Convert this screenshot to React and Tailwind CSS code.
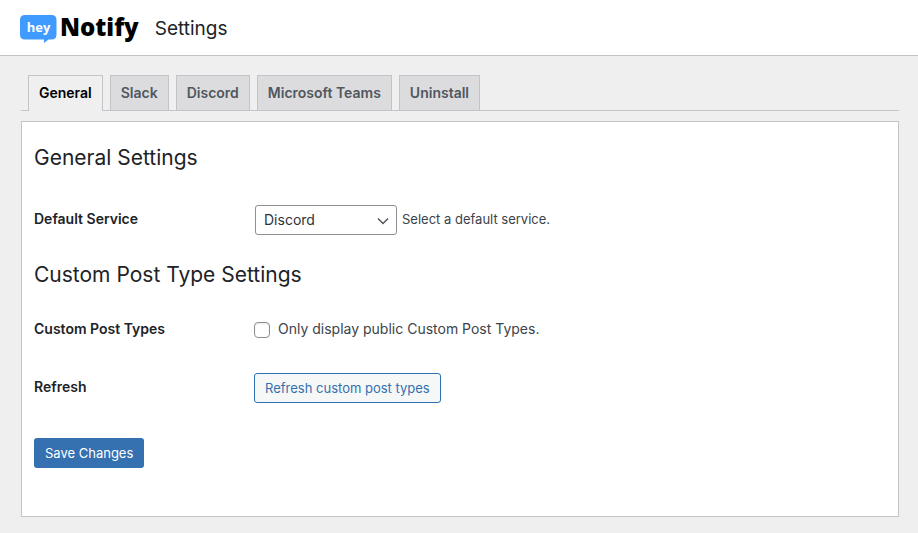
import React from "react";

const tabs = ["General", "Slack", "Discord", "Microsoft Teams", "Uninstall"];

function Logo() {
  return (
    <a href="#home" aria-label="hey Notify" className="flex items-start gap-[3px] text-black">
      <span className="relative flex h-7 w-[37px]">
        <svg viewBox="0 0 37 28" className="absolute inset-0 h-7 w-[37px]" fill="#3f9bff" aria-hidden="true">
          <path d="M5 0H31.500Q36.500 0 36.500 5V19.500Q36.500 24.500 31.500 24.500H28.500L24 28V24.500H5Q0 24.500 0 19.500V5Q0 0 5 0Z" />
        </svg>
        <span className="relative w-full text-center font-['Open_Sans',sans-serif] text-[13px] leading-6 font-bold text-white">
          hey
        </span>
      </span>
      <span className="font-['Noto_Sans',sans-serif] text-2xl leading-6 font-black">Notify</span>
    </a>
  );
}

function Field({ label, htmlFor, children, className }) {
  return (
    <div className={"flex items-center " + className}>
      <label htmlFor={htmlFor} className="w-[220px] shrink-0 pb-[2px] text-sm font-semibold text-[#1d2327]">
        {label}
      </label>
      {children}
    </div>
  );
}

export default function App() {
  return (
    <div className="min-h-screen bg-[#efefef] pb-4 font-[Inter,sans-serif] text-[#3c434a]">
      <header className="flex h-14 items-center gap-4 border-b border-[#c3c4c7] bg-white px-5 pt-[3px]">
        <Logo />
        <h1 className="text-[19px] leading-7 text-[#1d2327]">Settings</h1>
      </header>

      <main className="mr-[19px] ml-[21px] pt-[19px]">
        <nav className="flex gap-[7px] border-b border-[#c3c4c7] pl-[7px]">
          {tabs.map((tab, i) => (
            <a
              key={tab}
              href={"#" + tab}
              className={
                "border-x border-t border-[#c3c4c7] px-[10px] pt-[5px] text-sm leading-6 font-semibold " +
                (i === 0 ? "-mb-px bg-[#efefef] pb-[6px] text-black" : "bg-[#dcdcde] pb-[5px] text-[#50575e]")
              }
            >
              {tab}
            </a>
          ))}
        </nav>

        <form className="mt-[10px] border border-[#c3c4c7] bg-white px-3 pt-5 pb-12" onSubmit={(e) => e.preventDefault()}>
          <h2 className="text-[21px] leading-8 text-[#1d2327]">General Settings</h2>
          <Field label="Default Service" htmlFor="service" className="mt-[31px]">
            <span className="relative mr-[5px] ml-px flex">
              <select
                id="service"
                className="h-[30px] w-[142px] appearance-none rounded-[3px] border border-[#8c8f94] bg-white pr-6 pl-2 text-sm text-[#2c3338]"
              >
                <option>Discord</option>
                <option>Slack</option>
                <option>Microsoft Teams</option>
              </select>
              <svg
                viewBox="0 0 16 16"
                className="pointer-events-none absolute top-2 right-[6px] size-4"
                fill="none"
                stroke="#50575e"
                strokeWidth="1.5"
                aria-hidden="true"
              >
                <path d="M3 5.500l5 5 5-5" />
              </svg>
            </span>
            <span className="text-[13px]">Select a default service.</span>
          </Field>

          <h2 className="mt-6 text-[21px] leading-8 text-[#1d2327]">Custom Post Type Settings</h2>
          <Field label="Custom Post Types" htmlFor="public-only" className="mt-7">
            <input
              id="public-only"
              type="checkbox"
              className="mr-2 size-4 appearance-none rounded-[4px] border border-[#8c8f94] bg-white shadow-[inset_0_1px_2px_rgba(0,0,0,0.1)]"
            />
            <label htmlFor="public-only" className="pb-[2px] text-sm">
              Only display public Custom Post Types.
            </label>
          </Field>
          <Field label="Refresh" htmlFor="refresh" className="mt-8">
            <button
              id="refresh"
              type="button"
              className="h-[30px] rounded-[3px] border border-[#3271b1] bg-[#f6f7f7] px-[10px] pt-[2px] text-[13px] text-[#3271b1]"
            >
              Refresh custom post types
            </button>
          </Field>
          <button type="submit" className="mt-[35px] h-[30px] rounded-[3px] bg-[#3570b0] px-[11px] pt-[2px] text-[13px] text-white">
            Save Changes
          </button>
        </form>
      </main>
    </div>
  );
}
